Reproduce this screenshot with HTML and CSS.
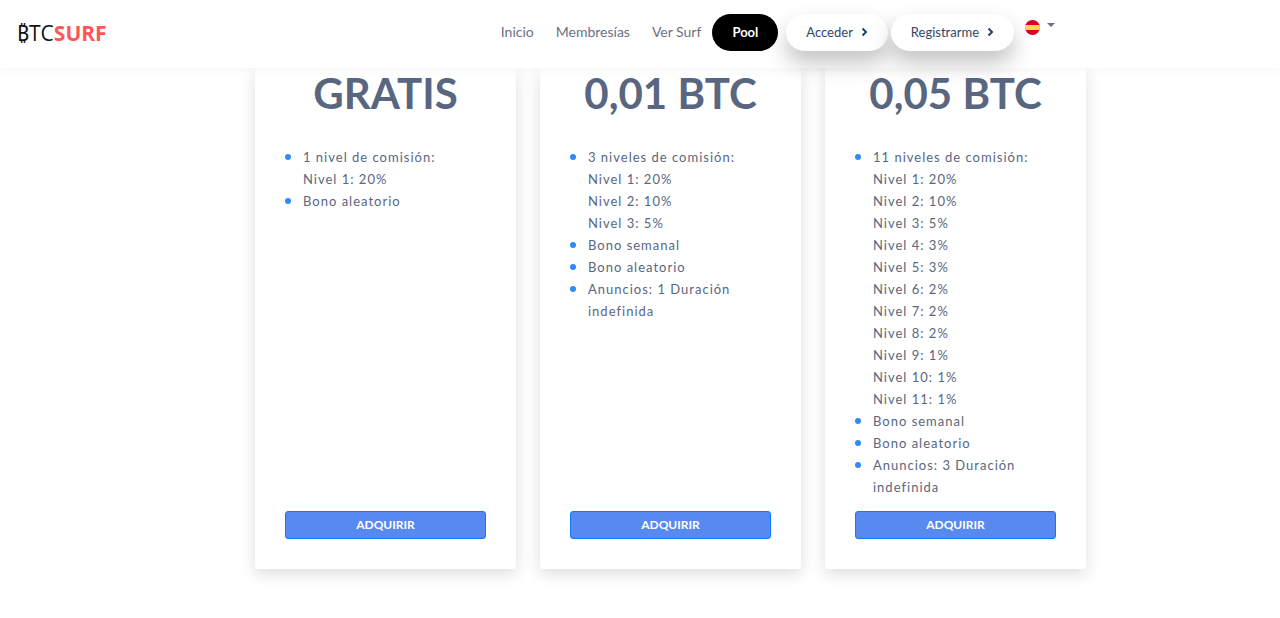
FILE: index.html
```html
<!DOCTYPE html>
<html lang="es">
<head>
<meta charset="utf-8">
<meta name="viewport" content="width=device-width, initial-scale=1">
<title>BTCSurf</title>
<link rel="stylesheet" href="styles.css">
</head>
<body>
<header class="header">
  <a class="logo" href="#">₿TC<span class="logo-accent">SURF</span></a>
  <nav class="nav">
    <a class="nav-link" href="#">Inicio</a>
    <a class="nav-link" href="#">Membresías</a>
    <a class="nav-link" href="#">Ver Surf</a>
    <a class="pill pill-dark" href="#">Pool</a>
    <a class="pill pill-light" href="#">Acceder <svg class="chevron" viewBox="0 0 6 10" aria-hidden="true"><path d="M1 1.5 4.5 5 1 8.5"/></svg></a>
    <a class="pill pill-light" href="#">Registrarme <svg class="chevron" viewBox="0 0 6 10" aria-hidden="true"><path d="M1 1.5 4.5 5 1 8.5"/></svg></a>
    <button class="language" type="button" aria-label="Español">
      <svg class="flag" viewBox="0 0 15 15" aria-hidden="true"><clipPath id="round"><circle cx="7.5" cy="7.5" r="7.5"/></clipPath><g clip-path="url(#round)"><path fill="#d80027" d="M0 0h15v15H0z"/><path fill="#ffda44" d="M0 5h15v5H0z"/></g></svg>
      <span class="caret"></span>
    </button>
  </nav>
</header>
<main class="plans">
  <section class="card">
    <h2 class="price">GRATIS</h2>
    <ul class="features">
      <li>1 nivel de comisión:<br>Nivel 1: 20%</li>
      <li>Bono aleatorio</li>
    </ul>
    <button class="buy" type="button">ADQUIRIR</button>
  </section>
  <section class="card">
    <h2 class="price">0,01 BTC</h2>
    <ul class="features">
      <li>3 niveles de comisión:<br>Nivel 1: 20%<br>Nivel 2: 10%<br>Nivel 3: 5%</li>
      <li>Bono semanal</li>
      <li>Bono aleatorio</li>
      <li>Anuncios: 1 Duración indefinida</li>
    </ul>
    <button class="buy" type="button">ADQUIRIR</button>
  </section>
  <section class="card">
    <h2 class="price">0,05 BTC</h2>
    <ul class="features">
      <li>11 niveles de comisión:<br>Nivel 1: 20%<br>Nivel 2: 10%<br>Nivel 3: 5%<br>Nivel 4: 3%<br>Nivel 5: 3%<br>Nivel 6: 2%<br>Nivel 7: 2%<br>Nivel 8: 2%<br>Nivel 9: 1%<br>Nivel 10: 1%<br>Nivel 11: 1%</li>
      <li>Bono semanal</li>
      <li>Bono aleatorio</li>
      <li>Anuncios: 3 Duración indefinida</li>
    </ul>
    <button class="buy" type="button">ADQUIRIR</button>
  </section>
</main>
</body>
</html>
```
FILE: styles.css
```css
* { box-sizing: border-box; }
body {
  margin: 0;
  background: #fff;
  color: #59667f;
  font-family: Lato, "Open Sans", sans-serif;
}
a { text-decoration: none; }
.header {
  position: sticky;
  top: 0;
  z-index: 10;
  display: flex;
  align-items: center;
  height: 68px;
  padding: 0 17px;
  background: #fff;
  box-shadow: 0 0 10px rgba(0, 0, 0, 0.06);
}
.logo {
  margin-bottom: 2px;
  color: #111;
  font: 400 21px/30px "Open Sans", "Noto Sans", sans-serif;
}
.logo-accent { color: #ff5757; font-weight: 700; }
.nav {
  display: flex;
  align-items: center;
  margin: 0 208px 4px auto;
}
.nav-link {
  margin-right: 22px;
  color: #6b6f85;
  font-size: 14px;
  line-height: 24px;
}
.nav-link:nth-child(3) { margin-right: 11px; }
.pill {
  display: flex;
  align-items: center;
  gap: 8px;
  height: 37px;
  padding: 0 20px;
  border-radius: 19px;
  font-size: 13px;
}
.pill-dark { margin-right: 8px; background: #000; color: #fff; font-weight: 700; }
.pill-light {
  margin-right: 3px;
  background: #fff;
  color: #304669;
  box-shadow: 0 12px 22px rgba(0, 0, 0, 0.24);
}
.chevron { width: 7px; height: 10px; fill: none; stroke: #25416a; stroke-width: 2; }
.language {
  display: flex;
  gap: 7px;
  margin: 0 0 9px 8px;
  padding: 0;
  border: 0;
  background: none;
}
.flag { width: 15px; height: 15px; }
.caret {
  height: 4px;
  margin-top: 3px;
  border: 4px solid transparent;
  border-top-color: #6b6f85;
  border-bottom: 0;
}
.plans {
  display: grid;
  grid-template-columns: repeat(3, 1fr);
  gap: 24px;
  max-width: 892px;
  margin: 0 auto;
  padding: 0 0 48px 61px;
}
.card {
  display: flex;
  flex-direction: column;
  padding: 0 30px 30px;
  border-radius: 3px;
  background: #fff;
  box-shadow: 0 5px 15px rgba(20, 20, 43, 0.14);
}
.price {
  margin: 0 0 28px;
  font-size: 42px;
  font-weight: 700;
  line-height: 50px;
  text-align: center;
  white-space: nowrap;
}
.features {
  flex: 1;
  margin: 0 0 13px;
  padding: 0;
  list-style: none;
  font-size: 13px;
  line-height: 22px;
  letter-spacing: 1px;
}
.features li { padding-left: 18px; }
.features li::before {
  content: "";
  float: left;
  width: 6px;
  height: 6px;
  margin: 8px 0 0 -18px;
  border-radius: 50%;
  background: #2f8bfa;
}
.buy {
  height: 28px;
  border: 1px solid #087bff;
  border-radius: 3px;
  background: #5889f0;
  color: #fff;
  font: 700 12px/18px Lato, sans-serif;
}
```
